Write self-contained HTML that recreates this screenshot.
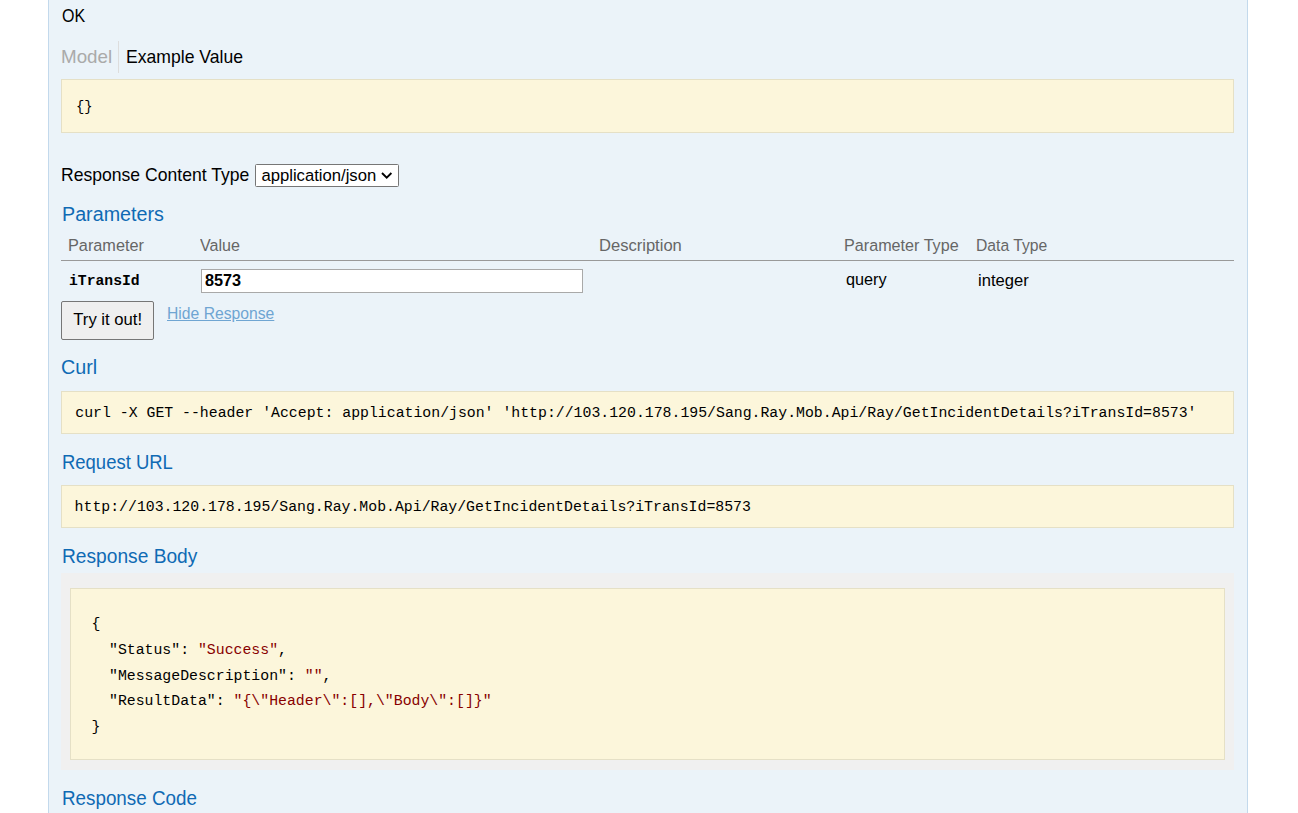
<!DOCTYPE html><html><head><meta charset='utf-8'><style>html,body{margin:0;padding:0}body{width:1298px;height:813px;overflow:hidden;position:relative;background:#fff}</style></head><body>

<div style="position:absolute;left:48px;top:-5px;width:1198px;height:830px;background:#ebf3f9;border:1px solid #c3d9ec;border-top:none"></div>
<div style="position:absolute;left:118px;top:41px;width:1px;height:32px;background:#ddd"></div>
<div style="position:absolute;left:61px;top:79px;width:1171px;height:52px;background:#fcf6db;border:1px solid #e5e0c6"></div>
<div style="position:absolute;left:255px;top:164px;width:142px;height:21px;background:#fff;border:1px solid #767676;border-radius:1.5px"></div>
<svg style="position:absolute;left:381px;top:171px" width="13" height="9" viewBox="0 0 13 9"><path d="M1.0 2.0 L5.7 6.6 L10.4 2.0" fill="none" stroke="#000" stroke-width="1.9"/></svg>
<div style="position:absolute;left:61px;top:260px;width:1173px;height:1px;background:#999"></div>
<div style="position:absolute;left:201px;top:269px;width:380px;height:22px;background:#fff;border:1px solid #a9a9a9"></div>
<div style="position:absolute;left:61px;top:301px;width:91px;height:37px;background:#efefef;border:1px solid #767676;border-radius:2px"></div>
<div style="position:absolute;left:61px;top:391px;width:1171px;height:41px;background:#fcf6db;border:1px solid #e5e0c6"></div>
<div style="position:absolute;left:61px;top:485px;width:1171px;height:41px;background:#fcf6db;border:1px solid #e5e0c6"></div>
<div style="position:absolute;left:61px;top:573px;width:1173px;height:197px;background:#f0f0f0"></div>
<div style="position:absolute;left:70px;top:588px;width:1153px;height:170px;background:#fcf6db;border:1px solid #e5e0c6"></div>

<div id="ok" style="position:absolute;left:61.700px;top:4px;font-family:'Liberation Sans', sans-serif;font-weight:400;font-size:19px;line-height:24px;color:#000;white-space:pre;transform-origin:0 0;transform:scaleX(0.84237);">OK</div>
<div id="model" style="position:absolute;left:61.011px;top:45px;font-family:'Liberation Sans', sans-serif;font-weight:400;font-size:19px;line-height:24px;color:#aaa;white-space:pre;transform-origin:0 0;transform:scaleX(0.98934);">Model</div>
<div id="exv" style="position:absolute;left:126.074px;top:45px;font-family:'Liberation Sans', sans-serif;font-weight:400;font-size:19px;line-height:24px;color:#000;white-space:pre;transform-origin:0 0;transform:scaleX(0.92615);">Example Value</div>
<div id="rct" style="position:absolute;left:61.475px;top:163px;font-family:'Liberation Sans', sans-serif;font-weight:400;font-size:19px;line-height:24px;color:#000;white-space:pre;transform-origin:0 0;transform:scaleX(0.92494);">Response Content Type</div>
<div id="seltxt" style="position:absolute;left:261.400px;top:165px;font-family:'Liberation Sans', sans-serif;font-weight:400;font-size:16.67px;line-height:21px;color:#000;white-space:pre;transform-origin:0 0;transform:scaleX(1.00000);">application/json</div>
<div id="params" style="position:absolute;left:62.014px;top:202px;font-family:'Liberation Sans', sans-serif;font-weight:400;font-size:20px;line-height:25px;color:#0f6ab4;white-space:pre;transform-origin:0 0;transform:scaleX(0.98565);">Parameters</div>
<div id="th1" style="position:absolute;left:67.565px;top:234px;font-family:'Liberation Sans', sans-serif;font-weight:400;font-size:17.4px;line-height:22px;color:#666;white-space:pre;transform-origin:0 0;transform:scaleX(0.93537);">Parameter</div>
<div id="th2" style="position:absolute;left:199.500px;top:234px;font-family:'Liberation Sans', sans-serif;font-weight:400;font-size:17.4px;line-height:22px;color:#666;white-space:pre;transform-origin:0 0;transform:scaleX(0.92437);">Value</div>
<div id="th3" style="position:absolute;left:599.448px;top:234px;font-family:'Liberation Sans', sans-serif;font-weight:400;font-size:17.4px;line-height:22px;color:#666;white-space:pre;transform-origin:0 0;transform:scaleX(0.95176);">Description</div>
<div id="th4" style="position:absolute;left:844.171px;top:234px;font-family:'Liberation Sans', sans-serif;font-weight:400;font-size:17.4px;line-height:22px;color:#666;white-space:pre;transform-origin:0 0;transform:scaleX(0.92913);">Parameter Type</div>
<div id="th5" style="position:absolute;left:976.498px;top:234px;font-family:'Liberation Sans', sans-serif;font-weight:400;font-size:17.4px;line-height:22px;color:#666;white-space:pre;transform-origin:0 0;transform:scaleX(0.90211);">Data Type</div>
<div id="pname" style="position:absolute;left:69.300px;top:272px;font-family:'Liberation Mono', monospace;font-weight:700;font-size:14.86px;line-height:19px;color:#000;white-space:pre;transform-origin:0 0;transform:scaleX(0.98978);">iTransId</div>
<div id="inval" style="position:absolute;left:204.900px;top:270px;font-family:'Liberation Sans', sans-serif;font-weight:700;font-size:16.67px;line-height:21px;color:#000;white-space:pre;transform-origin:0 0;transform:scaleX(0.97580);">8573</div>
<div id="query" style="position:absolute;left:845.900px;top:268px;font-family:'Liberation Sans', sans-serif;font-weight:400;font-size:17.3px;line-height:22px;color:#000;white-space:pre;transform-origin:0 0;transform:scaleX(0.94063);">query</div>
<div id="integer" style="position:absolute;left:977.640px;top:269px;font-family:'Liberation Sans', sans-serif;font-weight:400;font-size:17.3px;line-height:22px;color:#000;white-space:pre;transform-origin:0 0;transform:scaleX(0.95998);">integer</div>
<div id="try" style="position:absolute;left:73.300px;top:309px;font-family:'Liberation Sans', sans-serif;font-weight:400;font-size:16.67px;line-height:21px;color:#000;white-space:pre;transform-origin:0 0;transform:scaleX(1.00000);">Try it out!</div>
<div id="hide" style="position:absolute;left:166.798px;top:302px;font-family:'Liberation Sans', sans-serif;font-weight:400;font-size:17.4px;line-height:22px;color:#6fa5d2;white-space:pre;transform-origin:0 0;transform:scaleX(0.90246);text-decoration:underline;">Hide Response</div>
<div id="curlh" style="position:absolute;left:61.215px;top:355px;font-family:'Liberation Sans', sans-serif;font-weight:400;font-size:20px;line-height:25px;color:#0f6ab4;white-space:pre;transform-origin:0 0;transform:scaleX(0.98505);">Curl</div>
<div id="curl" style="position:absolute;left:75.300px;top:404px;font-family:'Liberation Mono', monospace;font-weight:400;font-size:14.84px;line-height:19px;color:#000;white-space:pre;transform-origin:0 0;transform:scaleX(1.00000);">curl -X GET --header 'Accept: application/json' 'http://103.120.178.195/Sang.Ray.Mob.Api/Ray/GetIncidentDetails?iTransId=8573'</div>
<div id="urlh" style="position:absolute;left:62.177px;top:450px;font-family:'Liberation Sans', sans-serif;font-weight:400;font-size:20px;line-height:25px;color:#0f6ab4;white-space:pre;transform-origin:0 0;transform:scaleX(0.92319);">Request URL</div>
<div id="url" style="position:absolute;left:74.600px;top:498px;font-family:'Liberation Mono', monospace;font-weight:400;font-size:14.84px;line-height:19px;color:#000;white-space:pre;transform-origin:0 0;transform:scaleX(1.00000);">http://103.120.178.195/Sang.Ray.Mob.Api/Ray/GetIncidentDetails?iTransId=8573</div>
<div id="bodyh" style="position:absolute;left:62.141px;top:544px;font-family:'Liberation Sans', sans-serif;font-weight:400;font-size:20px;line-height:25px;color:#0f6ab4;white-space:pre;transform-origin:0 0;transform:scaleX(0.95862);">Response Body</div>
<div id="codeh" style="position:absolute;left:62.160px;top:786px;font-family:'Liberation Sans', sans-serif;font-weight:400;font-size:20px;line-height:25px;color:#0f6ab4;white-space:pre;transform-origin:0 0;transform:scaleX(0.94024);">Response Code</div>
<div id="ex" style="position:absolute;left:76.069px;top:98px;font-family:'Liberation Mono', monospace;font-weight:400;font-size:14.84px;line-height:19px;color:#000;white-space:pre;transform-origin:0 0;transform:scaleX(0.93092);">{}</div>
<div id="j1" style="position:absolute;left:91.600px;top:615px;font-family:'Liberation Mono', monospace;font-weight:400;font-size:14.84px;line-height:19px;color:#000;white-space:pre;transform-origin:0 0;transform:scaleX(1.00000);">{</div>
<div id="j2" style="position:absolute;left:91.203px;top:641px;font-family:'Liberation Mono', monospace;font-weight:400;font-size:14.84px;line-height:19px;color:#000;white-space:pre;transform-origin:0 0;transform:scaleX(1.00000);">  "Status": <span style="color:#880000">"Success"</span>,</div>
<div id="j3" style="position:absolute;left:91.203px;top:667px;font-family:'Liberation Mono', monospace;font-weight:400;font-size:14.84px;line-height:19px;color:#000;white-space:pre;transform-origin:0 0;transform:scaleX(1.00000);">  "MessageDescription": <span style="color:#880000">""</span>,</div>
<div id="j4" style="position:absolute;left:91.203px;top:692px;font-family:'Liberation Mono', monospace;font-weight:400;font-size:14.84px;line-height:19px;color:#000;white-space:pre;transform-origin:0 0;transform:scaleX(1.00000);">  "ResultData": <span style="color:#880000">"{\"Header\":[],\"Body\":[]}"</span></div>
<div id="j5" style="position:absolute;left:91.600px;top:718px;font-family:'Liberation Mono', monospace;font-weight:400;font-size:14.84px;line-height:19px;color:#000;white-space:pre;transform-origin:0 0;transform:scaleX(1.00000);">}</div></body></html>
